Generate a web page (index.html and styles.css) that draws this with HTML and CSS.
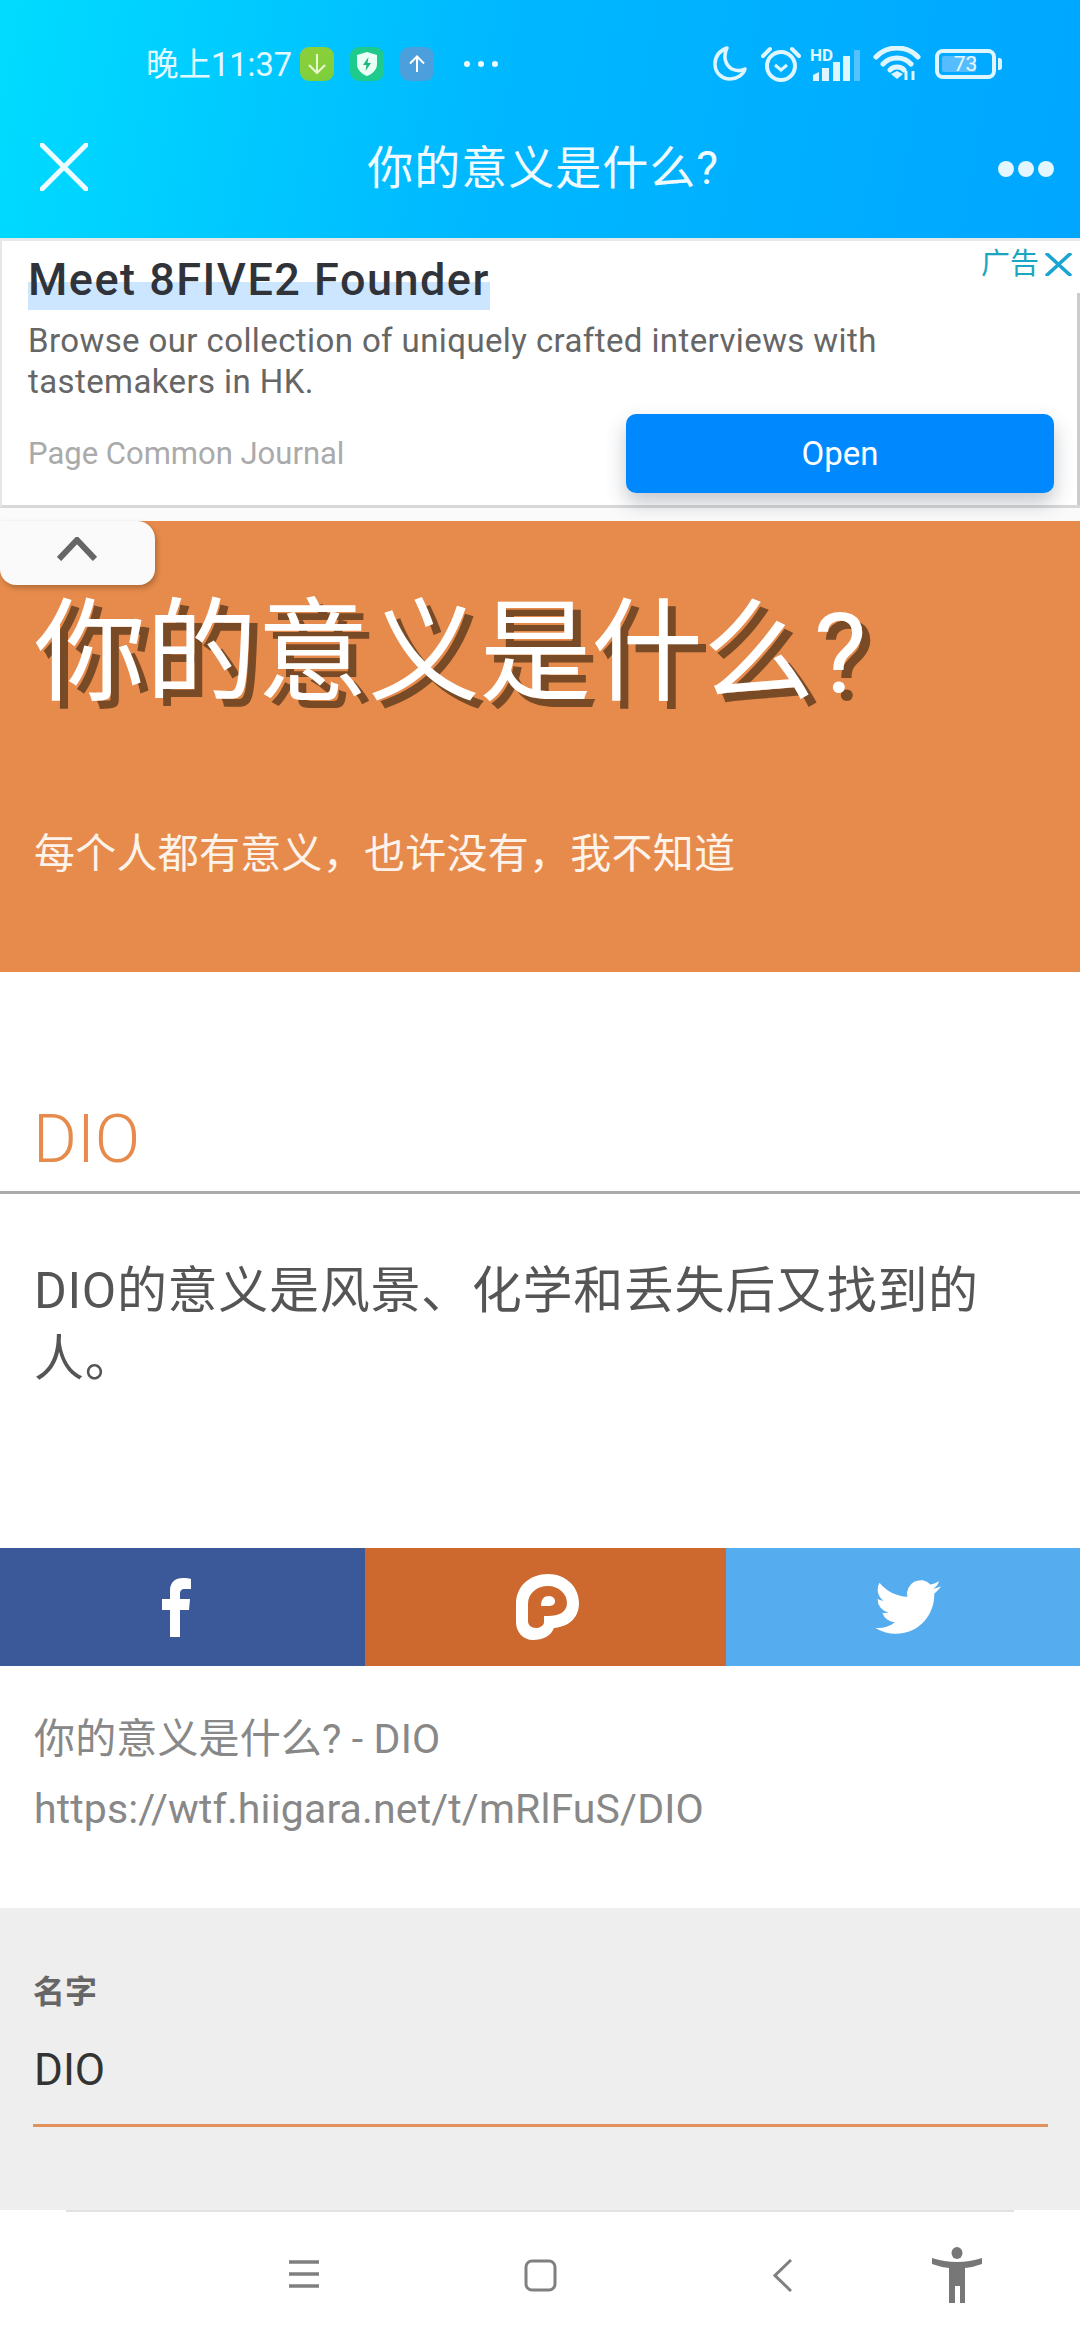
FILE: index.html
```html
<!DOCTYPE html>
<html lang="zh-CN">
<head>
    <meta charset="UTF-8">
    <meta name="viewport" content="width=device-width, initial-scale=1.0">
    <title>你的意义是什么?</title>
    <link rel="stylesheet" href="styles.css">
</head>
<body>

<header class="top">
    <div class="status">
        <div class="status-left">
            <span class="time">晚上11:37</span>
            <span class="app app-green">
                <svg width="20" height="22" viewBox="0 0 20 22"><path d="M10 1V20M2 12L10 20L18 12" fill="none" stroke="#eaf8d0" stroke-width="2"/></svg>
            </span>
            <span class="app app-teal">
                <svg width="22" height="26" viewBox="0 0 22 26"><path d="M11 1L21 4V13C21 19 16 23 11 25C6 23 1 19 1 13V4Z" fill="#eafff6"/><path d="M12.500 6L7 14H10.500L9.500 20L15 12H11.500Z" fill="#1fb57e"/></svg>
            </span>
            <span class="app app-blue">
                <svg width="18" height="18" viewBox="0 0 18 18"><path d="M9 17V1.500M2 8.500L9 1.500L16 8.500" fill="none" stroke="#fff" stroke-width="2"/></svg>
            </span>
            <span class="more-dots"><i></i><i></i><i></i></span>
        </div>
        <div class="status-right">
            <svg class="ic-moon" width="34" height="35" viewBox="0 0 34 35"><path d="M14 2C6 5 2 11 2 18C2 27 9 33 17 33C24 33 30 29 32 23C28 25 23 25 19 23C12 19 10 10 14 2Z" fill="none" stroke="#dff6ff" stroke-width="3.500" stroke-linejoin="round"/></svg>
            <svg class="ic-alarm" width="40" height="36" viewBox="0 0 40 36"><circle cx="20" cy="20" r="14" fill="none" stroke="#dff6ff" stroke-width="4"/><path d="M14 19L20 24L26 19" fill="none" stroke="#dff6ff" stroke-width="3"/><path d="M2 10L9 3M38 10L31 3" fill="none" stroke="#dff6ff" stroke-width="4" stroke-linecap="round"/></svg>
            <span class="signal">
                <span class="hd">HD</span>
                <svg width="48" height="31" viewBox="0 0 48 31"><path d="M1 25L7 22V31H1ZM10 18H17V31H10ZM21 12H28V31H21ZM31 6H38V31H31Z" fill="#dff6ff"/><path d="M42 0H48V31H42Z" fill="#56c1ff"/></svg>
            </span>
            <svg class="ic-wifi" width="48" height="34" viewBox="0 0 48 34"><path d="M3 11C14 -1 34 -1 45 11M10 18C17 10 31 10 38 18M17 24C20 20 28 20 31 24" fill="none" stroke="#dff6ff" stroke-width="5" stroke-linecap="round"/><path d="M18 28L24 25L30 28L24 33Z" fill="#dff6ff"/><path d="M33 25V34M40 25V34" stroke="#dff6ff" stroke-width="3"/></svg>
            <span class="battery">
                <span class="battery-body"><span class="battery-fill"></span><span class="battery-num">73</span></span>
                <span class="battery-cap"></span>
            </span>
        </div>
    </div>
    <div class="navbar">
        <svg width="48" height="48" viewBox="0 0 48 48"><path d="M2 2L46 46M46 2L2 46" stroke="#eefbff" stroke-width="5" stroke-linecap="round"/></svg>
        <div class="nav-title">你的意义是什么?</div>
        <div class="nav-dots"><i></i><i></i><i></i></div>
    </div>
</header>

<section class="ad">
    <div class="ad-label">
        <span>广告</span>
        <svg width="27" height="23" viewBox="0 0 27 23"><path d="M1 0L26 23M26 0L1 23" stroke="#1aa5d0" stroke-width="3.500"/></svg>
    </div>
    <h3 class="ad-title">Meet 8FIVE2 Founder</h3>
    <p class="ad-desc">Browse our collection of uniquely crafted interviews with tastemakers in HK.</p>
    <div class="ad-foot">
        <span class="ad-source">Page Common Journal</span>
        <button class="ad-btn">Open</button>
    </div>
    <div class="ad-scroll"></div>
</section>

<main class="page">
    <div class="hero">
        <div class="collapse-tab">
            <svg width="40" height="24" viewBox="0 0 40 24"><path d="M2 22L20 3L38 22" fill="none" stroke="#666" stroke-width="6"/></svg>
        </div>
        <h1>你的意义是什么?</h1>
        <p>每个人都有意义，也许没有，我不知道</p>
    </div>

    <h2 class="word">DIO</h2>
    <p class="meaning">DIO的意义是风景、化学和丢失后又找到的人。</p>

    <div class="share">
        <a class="share-fb">
            <svg width="29" height="59" viewBox="0 0 29 59"><path d="M8 59V32H0V21H8V13C8 4 13 0 21 0C24 0 27 0 29 1V11H23C19 11 18 13 18 16V21H28L27 32H18V59Z" fill="#fff"/></svg>
        </a>
        <a class="share-plurk">
            <svg width="64" height="66" viewBox="0 0 64 66"><path d="M0 30C0 12 14 0 32 0C50 0 63 13 63 29C63 46 50 53 38 54C35 62 27 66 17 66C7 66 0 58 0 48Z" fill="#fff"/><path d="M12 30C12 19 21 12 32 12C43 12 51 20 51 29C51 38 43 42 32 42H28V48C28 52 23 54 20 54C15 54 12 51 12 47Z" fill="#cd692f"/><path d="M25 32C25 25 28 22 33 22C37 22 39 25 39 27C39 31 36 32 32 32Z" fill="#fff"/></svg>
        </a>
        <a class="share-tw">
            <svg width="66" height="66" viewBox="0 0 24 24"><path d="M23.953 4.570a10 10 0 01-2.825.775 4.958 4.958 0 002.163-2.723c-.951.555-2.005.959-3.127 1.184a4.920 4.920 0 00-8.384 4.482C7.690 8.095 4.067 6.130 1.640 3.162a4.822 4.822 0 00-.666 2.475c0 1.710.870 3.213 2.188 4.096a4.904 4.904 0 01-2.228-.616v.060a4.923 4.923 0 003.946 4.827 4.996 4.996 0 01-2.212.085 4.936 4.936 0 004.604 3.417 9.867 9.867 0 01-6.102 2.105c-.390 0-.779-.023-1.170-.067a13.995 13.995 0 007.557 2.209c9.053 0 13.998-7.496 13.998-13.985 0-.210 0-.420-.015-.630A9.935 9.935 0 0024 4.590z" fill="#fff"/></svg>
        </a>
    </div>

    <div class="link-text">
        <div>你的意义是什么? - DIO</div>
        <div>https://wtf.hiigara.net/t/mRlFuS/DIO</div>
    </div>

    <form class="name-form">
        <label for="name">名字</label>
        <input type="text" id="name" value="DIO">
    </form>
</main>

<nav class="sysnav">
    <svg class="nav-menu" width="30" height="28" viewBox="0 0 30 28"><path d="M0 2H30M0 14H30M0 26H30" stroke="#808080" stroke-width="3.500"/></svg>
    <svg class="nav-home" width="33" height="33" viewBox="0 0 33 33"><rect x="2" y="2" width="29" height="29" rx="6" fill="none" stroke="#808080" stroke-width="3"/></svg>
    <svg class="nav-back" width="19" height="33" viewBox="0 0 19 33"><path d="M18 1L2 16.500L18 32" fill="none" stroke="#808080" stroke-width="3"/></svg>
    <svg class="nav-person" width="50" height="56" viewBox="0 0 50 56"><ellipse cx="25" cy="6" rx="5.500" ry="6" fill="#777"/><path d="M0 11Q25 19 50 11V17Q42 20 33 21V56H28V39H23V56H17V21Q8 20 0 17Z" fill="#777"/></svg>
</nav>

</body>
</html>
```

FILE: styles.css
```css
* {
    box-sizing: border-box;
}

body {
    margin: 0;
    width: 1080px;
    height: 2340px;
    overflow: hidden;
    display: flex;
    flex-direction: column;
    font-family: Roboto, "Noto Sans CJK SC", sans-serif;
    background-color: #fff;
}

/* top bar */
.top {
    height: 238px;
    background: linear-gradient(100deg, #00dcff 0%, #00b8ff 45%, #00a6ff 100%);
    color: #eefbff;
}

.status {
    height: 128px;
    padding: 46px 78px 0 146px;
    display: flex;
    justify-content: space-between;
    align-items: flex-start;
}

.status-left {
    display: flex;
    align-items: center;
    height: 36px;
}

.time {
    font-size: 32.500px;
    line-height: 36px;
    width: 154px;
    margin-top: 1px;
    color: #e4f9ff;
}

.app {
    width: 34px;
    height: 34px;
    border-radius: 9px;
    margin-right: 16px;
    display: flex;
    align-items: center;
    justify-content: center;
}

.app-green {
    background: linear-gradient(160deg, #8ecf3a, #7ccf3c);
}

.app-teal {
    background-color: #1ecb8c;
}

.app-blue {
    background-color: #4a9fdc;
}

.more-dots {
    display: flex;
    gap: 8px;
    margin-left: 14px;
}

.more-dots i {
    width: 6px;
    height: 6px;
    border-radius: 50%;
    background-color: #eefbff;
}

.status-right {
    display: flex;
    align-items: flex-start;
}

.ic-moon {
    margin-right: 14px;
}

.ic-alarm {
    margin-right: 11px;
}

.signal {
    position: relative;
    width: 48px;
    height: 35px;
    margin-right: 13px;
    padding-top: 4px;
}

.hd {
    position: absolute;
    left: -2px;
    top: 2px;
    font-size: 17px;
    line-height: 14px;
    font-weight: 700;
    color: #dff6ff;
}

.ic-wifi {
    margin-right: 14px;
}

.battery {
    display: flex;
    align-items: center;
    margin-top: 3px;
}

.battery-body {
    position: relative;
    width: 61px;
    height: 30px;
    border: 4px solid #dff6ff;
    border-radius: 8px;
    display: flex;
    align-items: center;
    justify-content: center;
}

.battery-fill {
    position: absolute;
    left: 3px;
    top: 3px;
    bottom: 3px;
    width: 34px;
    border-radius: 2px;
    background-color: #55bcff;
}

.battery-num {
    position: relative;
    font-size: 21px;
    line-height: 22px;
    color: #e4f9ff;
}

.battery-cap {
    width: 4px;
    height: 12px;
    margin-left: 2px;
    border-radius: 0 3px 3px 0;
    background-color: #dff6ff;
}

.navbar {
    height: 110px;
    padding: 15px 26px 0 40px;
    display: flex;
    align-items: flex-start;
    justify-content: space-between;
}

.nav-title {
    font-size: 46px;
    line-height: 54px;
    letter-spacing: 1px;
    margin-top: -2px;
    color: #f0fbff;
}

.nav-dots {
    display: flex;
    gap: 4px;
    margin-top: 18px;
}

.nav-dots i {
    width: 16px;
    height: 16px;
    border-radius: 50%;
    background-color: #e4f6ff;
}

/* ad */
.ad {
    position: relative;
    height: 270px;
    padding: 14px 28px 0;
    background-color: #fff;
    border-top: 3px solid #e6e9ec;
    border-left: 2px solid #e6e6e6;
    border-bottom: 3px solid #d8d8d8;
}

.ad-label {
    position: absolute;
    top: 5px;
    right: 8px;
    display: flex;
    align-items: center;
    gap: 6px;
    font-size: 29px;
    line-height: 36px;
    color: #1aa5c0;
}

.ad-title {
    width: fit-content;
    margin: 0 0 0 -2px;
    padding-bottom: 5px;
    font-size: 45px;
    line-height: 50px;
    font-weight: 500;
    letter-spacing: 1.500px;
    color: #30343a;
    background: linear-gradient(#fff 0, #fff 49%, #cce6ff 49%, #cce6ff 100%);
}

.ad-desc {
    margin: 10px 0 0 -2px;
    width: 880px;
    font-size: 33px;
    line-height: 41px;
    letter-spacing: 0.400px;
    color: #666;
}

.ad-foot {
    display: flex;
    justify-content: space-between;
    align-items: center;
    margin: 0 -2px 0 -2px;
    padding-top: 12px;
}

.ad-source {
    font-size: 31px;
    color: #aaa;
}

.ad-btn {
    width: 428px;
    height: 79px;
    border: none;
    border-radius: 10px;
    background-color: #0088ff;
    color: #fff;
    font-family: inherit;
    font-size: 33px;
    box-shadow: 0 10px 20px rgba(60, 70, 90, 0.3);
}

.ad-scroll {
    position: absolute;
    right: 0;
    top: 52px;
    bottom: 0;
    width: 3px;
    background-color: #ccc;
}

/* page */
.page {
    flex: 1;
    background-color: #fafafa;
    padding-top: 13px;
    overflow: hidden;
}

.hero {
    position: relative;
    height: 451px;
    padding: 66px 34px 0;
    background-color: #e68b4c;
    color: #fff;
}

.collapse-tab {
    position: absolute;
    left: 0;
    top: 0;
    width: 155px;
    height: 64px;
    padding: 16px 0 0 57px;
    background-color: #fafafa;
    border-radius: 0 0 16px 16px;
    border-top-right-radius: 18px;
    box-shadow: 2px 3px 5px rgba(120, 70, 30, 0.45);
}

.hero h1 {
    margin: 0;
    font-size: 112px;
    line-height: 134px;
    font-weight: 400;
    letter-spacing: -0.600px;
    text-shadow: 8px 8px 0 #784a25;
}

.hero p {
    margin: 105px 0 0;
    font-size: 41px;
    line-height: 56px;
    letter-spacing: 0.250px;
    color: #fdf3ea;
}

.word {
    margin: 0;
    height: 222px;
    padding: 127px 33px 0;
    font-size: 67px;
    line-height: 80px;
    font-weight: 350;
    color: #e68b4c;
    background-color: #fff;
    border-bottom: 3px solid #aaa;
}

.meaning {
    margin: 0;
    height: 354px;
    padding: 63px 34px 0;
    font-size: 50px;
    line-height: 68px;
    letter-spacing: 0.700px;
    color: #555;
    background-color: #fff;
}

.share {
    height: 118px;
    display: flex;
}

.share a {
    display: flex;
    align-items: center;
    justify-content: center;
}

.share-fb {
    width: 365px;
    padding-right: 13px;
    background-color: #3b5998;
}

.share-plurk {
    width: 361px;
    padding-left: 5px;
    background-color: #cd692f;
}

.share-tw {
    width: 354px;
    padding-left: 10px;
    background-color: #55acee;
}

.link-text {
    height: 242px;
    padding: 38px 34px 0;
    font-size: 41px;
    line-height: 70px;
    letter-spacing: 0.140px;
    color: #888;
    background-color: #fff;
}

.name-form {
    height: 302px;
    padding: 62px 32px 0 33px;
    background-color: #eee;
}

.name-form label {
    display: block;
    font-size: 32px;
    line-height: 44px;
    font-weight: 700;
    color: #666;
}

.name-form input {
    display: block;
    width: 100%;
    height: 101px;
    margin-top: 12px;
    padding: 0 0 10px 1px;
    border: none;
    border-bottom: 3px solid #e0915c;
    border-radius: 0;
    background: none;
    font-family: inherit;
    font-size: 44px;
    color: #333;
}

/* system nav */
.sysnav {
    position: relative;
    height: 130px;
    padding: 37px 0 0 289px;
    display: flex;
    align-items: flex-start;
    background-color: #fff;
}

.sysnav::before {
    content: "";
    position: absolute;
    left: 66px;
    right: 66px;
    top: 0;
    height: 2px;
    background-color: #e2e2e2;
}

.nav-menu {
    margin: 13px 205px 0 0;
}

.nav-home {
    margin: 12px 216px 0 0;
}

.nav-back {
    margin: 12px 140px 0 0;
}
```
